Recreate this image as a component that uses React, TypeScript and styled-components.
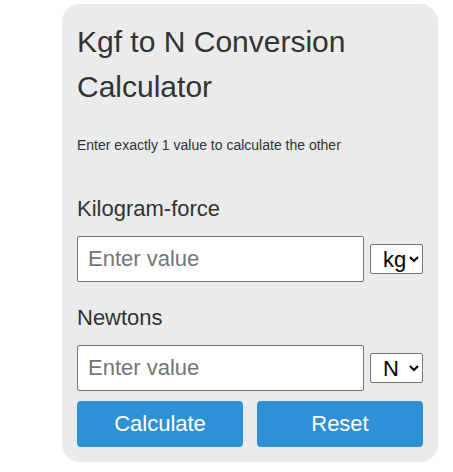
import styled, { createGlobalStyle } from "styled-components";

const GlobalStyle = createGlobalStyle`
  body {
    margin: 0;
    background: #ffffff;
    font-family: "Liberation Sans", Arial, sans-serif;
  }
`

const Page = styled.div`
  display: flex;
  padding: 4px 15px 10px 62px;
  width: 453px;
  box-sizing: border-box;
`

const Card = styled.div`
  width: 376px;
  box-sizing: border-box;
  background: #eaebeb;
  border-radius: 18px;
  padding: 15px 15px 15px 15px;
  color: #333333;
`

const Title = styled.h1`
  margin: 0;
  font-size: 30px;
  font-weight: 400;
  line-height: 45px;
`

const Hint = styled.p`
  margin: 28px 0 0 0;
  font-size: 14px;
  line-height: 16px;
`

const Label = styled.label<{ $first?: boolean }>`
  display: block;
  margin-top: ${(p) => (p.$first ? "43px" : "23px")};
  font-size: 22px;
  line-height: 25px;
`

const Row = styled.div`
  display: flex;
  align-items: center;
  gap: 6px;
  margin-top: 15px;
`

const Input = styled.input`
  flex: 1;
  min-width: 0;
  height: 46px;
  box-sizing: border-box;
  border: 1px solid #767676;
  border-radius: 2px;
  padding: 0 10px;
  font-family: "Liberation Sans", Arial, sans-serif;
  font-size: 22px;
  background: #ffffff;
  &::placeholder {
    color: #757575;
  }
`

const Select = styled.select`
  width: 53px;
  height: 30px;
  box-sizing: border-box;
  border: 1px solid #767676;
  border-radius: 2px;
  background: #ffffff;
  font-family: "Liberation Sans", Arial, sans-serif;
  font-size: 22px;
  color: #000000;
  padding: 0 0 0 8px;
`

const Buttons = styled.div`
  display: grid;
  grid-template-columns: 1fr 1fr;
  gap: 14px;
  margin-top: 10px;
`

const Button = styled.button`
  height: 46px;
  border: none;
  border-radius: 4px;
  background: #2e91d8;
  color: #ffffff;
  font-family: "Liberation Sans", Arial, sans-serif;
  font-size: 22px;
  cursor: pointer;
`

const App = () => {
  return (
    <>
      <GlobalStyle />
      <Page>
        <Card>
          <Title>Kgf to N Conversion Calculator</Title>
          <Hint>Enter exactly 1 value to calculate the other</Hint>
          <Label $first>Kilogram-force</Label>
          <Row>
            <Input placeholder="Enter value" />
            <Select defaultValue="kgf">
              <option value="kgf">kgf</option>
            </Select>
          </Row>
          <Label>Newtons</Label>
          <Row>
            <Input placeholder="Enter value" />
            <Select defaultValue="N">
              <option value="N">N</option>
            </Select>
          </Row>
          <Buttons>
            <Button>Calculate</Button>
            <Button>Reset</Button>
          </Buttons>
        </Card>
      </Page>
    </>
  )
}

export default App
